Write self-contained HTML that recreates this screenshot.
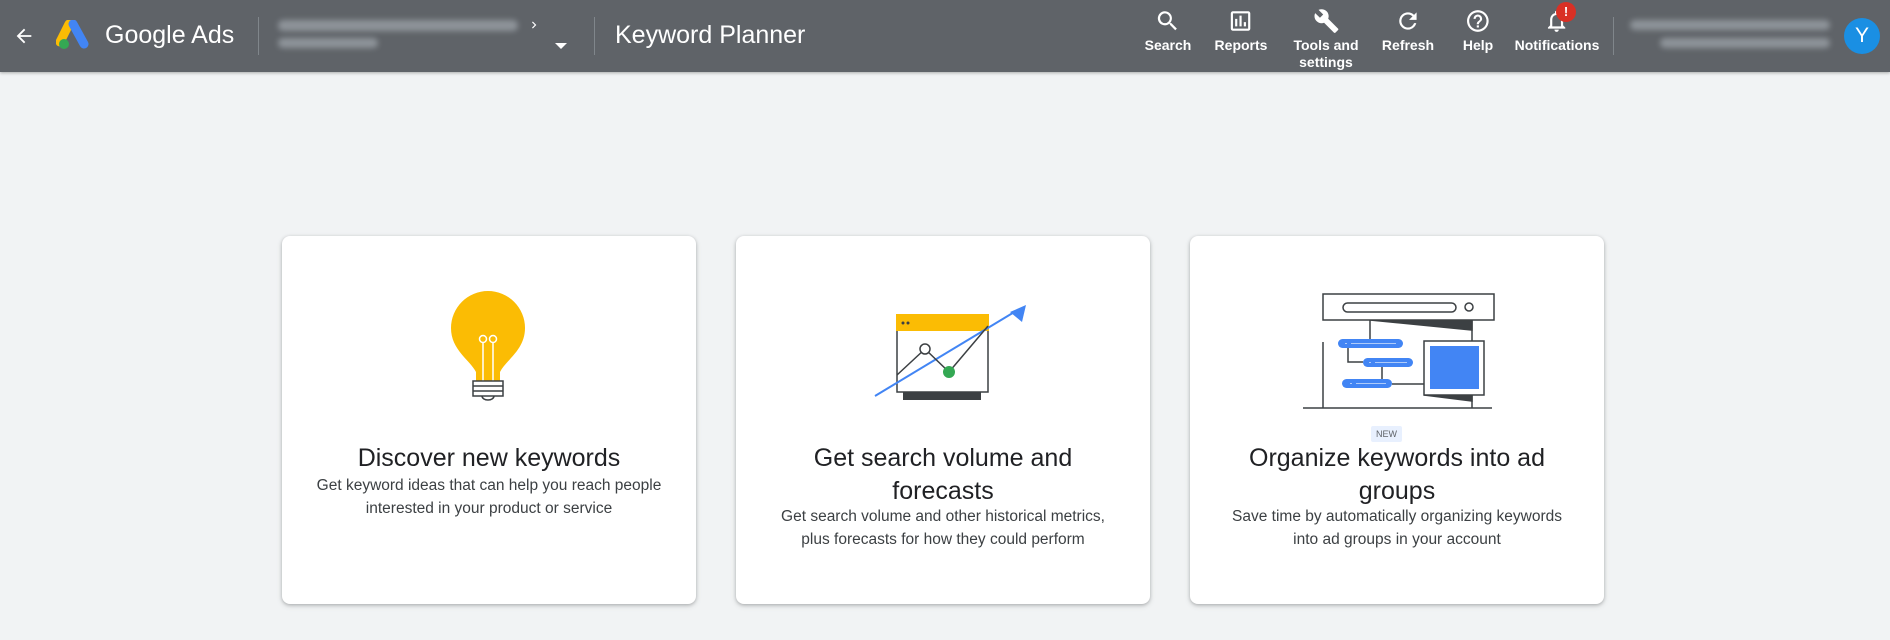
<!DOCTYPE html>
<html><head><meta charset="utf-8"><style>
*{margin:0;padding:0;box-sizing:border-box}
body{width:1890px;height:640px;background:#f1f3f4;font-family:"Liberation Sans",Arial,sans-serif;position:relative;overflow:hidden}
.hdr{position:absolute;left:0;top:0;width:1890px;height:72px;background:#5f6368;box-shadow:0 1px 3px rgba(0,0,0,.3)}
.abs{position:absolute}
.vd{position:absolute;width:1px;background:#80868b;top:17px;height:38px}
.blur{position:absolute;background:#9aa0a6;border-radius:6px;filter:blur(3px);opacity:.8}
.nav{position:absolute;top:8px;color:#fff;font-size:14px;font-weight:bold;text-align:center;transform:translateX(-50%);line-height:17px;white-space:nowrap}
.nav svg{display:block;margin:0 auto 3px}
.card{position:absolute;top:236px;width:414px;height:368px;background:#fff;border-radius:8px;box-shadow:0 1px 3px rgba(60,64,67,.3),0 2px 6px rgba(60,64,67,.15)}
.t{position:absolute;left:0;width:100%;text-align:center;color:#202124;font-size:25px;line-height:33px}
.d{position:absolute;left:0;width:100%;text-align:center;color:#3c4043;font-size:15.5px;line-height:22.5px}
</style></head><body>
<div class="hdr">
<svg class="abs" style="left:13px;top:25px" width="22" height="22" viewBox="0 0 24 24"><path d="M20 11H7.8l5.6-5.6L12 4l-8 8 8 8 1.4-1.4L7.8 13H20z" fill="#fff"/></svg>
<svg class="abs" style="left:56px;top:20px" width="36" height="32" viewBox="0 0 36 32"><path d="M13 4 L4 22" stroke="#fbbc04" stroke-width="9" stroke-linecap="round"/><path d="M17 4 L28 24" stroke="#4285f4" stroke-width="9" stroke-linecap="round"/><circle cx="8" cy="24" r="5" fill="#34a853"/></svg>
<div class="abs" style="left:105px;top:20px;color:#fff;font-size:25px;line-height:30px">Google Ads</div>
<div class="vd" style="left:258px"></div>
<div class="blur" style="left:278px;top:20px;width:240px;height:11px"></div>
<div class="blur" style="left:278px;top:38px;width:100px;height:10px"></div>
<svg class="abs" style="left:527px;top:18px" width="14" height="14" viewBox="0 0 24 24"><path d="M8.6 16.6 13.2 12 8.6 7.4 10 6l6 6-6 6z" fill="#fff"/></svg>
<svg class="abs" style="left:554px;top:42px" width="14" height="8"><path d="M1 1h12L7 7z" fill="#fff"/></svg>
<div class="vd" style="left:594px"></div>
<div class="abs" style="left:615px;top:20px;color:#fff;font-size:25px;line-height:30px">Keyword Planner</div>

<div class="nav" style="left:1168px"><svg width="26" height="26" viewBox="0 0 24 24"><path d="M15.5 14h-.8l-.3-.3A6.5 6.5 0 1 0 9.5 16a6.5 6.5 0 0 0 4.2-1.6l.3.3v.8l5 5 1.5-1.5zm-6 0A4.5 4.5 0 1 1 14 9.5 4.5 4.5 0 0 1 9.5 14z" fill="#fff"/></svg>Search</div>
<div class="nav" style="left:1241px"><svg width="26" height="26" viewBox="0 0 24 24"><path d="M19 3H5a2 2 0 0 0-2 2v14a2 2 0 0 0 2 2h14a2 2 0 0 0 2-2V5a2 2 0 0 0-2-2zm0 16H5V5h14zM7 10h2v7H7zm4-3h2v10h-2zm4 6h2v4h-2z" fill="#fff"/></svg>Reports</div>
<div class="nav" style="left:1326px"><svg width="26" height="26" viewBox="0 0 24 24"><path d="M22.7 19l-9.1-9.1c.9-2.3.4-5-1.5-6.9-2-2-5-2.4-7.4-1.3L9 6 6 9 1.6 4.7C.4 7.1.9 10.1 2.9 12.1c1.9 1.9 4.6 2.4 6.9 1.5l9.1 9.1c.4.4 1 .4 1.4 0l2.3-2.3c.5-.4.5-1.1.1-1.4z" fill="#fff"/></svg>Tools and<br>settings</div>
<div class="nav" style="left:1408px"><svg width="26" height="26" viewBox="0 0 24 24"><path d="M17.65 6.35A7.960 7.96 0 0 0 12 4a8 8 0 1 0 7.73 10h-2.08A6 6 0 1 1 12 6c1.66 0 3.140.69 4.22 1.78L13 11h7V4z" fill="#fff"/></svg>Refresh</div>
<div class="nav" style="left:1478px"><svg width="26" height="26" viewBox="0 0 24 24"><path d="M11 18h2v-2h-2zm1-16a10 10 0 1 0 0 20 10 10 0 0 0 0-20zm0 18a8 8 0 1 1 0-16 8 8 0 0 1 0 16zm0-14a4 4 0 0 0-4 4h2a2 2 0 0 1 4 0c0 2-3 1.75-3 5h2c0-2.25 3-2.5 3-5a4 4 0 0 0-4-4z" fill="#fff"/></svg>Help</div>
<div class="nav" style="left:1557px"><svg width="26" height="26" viewBox="0 0 24 24"><path d="M12 22a2 2 0 0 0 2-2h-4a2 2 0 0 0 2 2zm6-6v-5c0-3.07-1.64-5.64-4.5-6.32V4a1.5 1.5 0 0 0-3 0v.68C7.630 5.36 6 7.92 6 11v5l-2 2v1h16v-1zm-2 1H8v-6c0-2.48 1.51-4.5 4-4.5s4 2.02 4 4.5z" fill="#fff"/></svg>Notifications</div>
<div class="abs" style="left:1556px;top:2px;width:20px;height:20px;border-radius:50%;background:#d93025;color:#fff;font-size:13px;font-weight:bold;text-align:center;line-height:20px">!</div>
<div class="vd" style="left:1613px"></div>
<div class="blur" style="left:1630px;top:20px;width:200px;height:10px"></div>
<div class="blur" style="left:1660px;top:38px;width:170px;height:10px"></div>
<div class="abs" style="left:1844px;top:18px;width:36px;height:36px;border-radius:50%;background:#1a8fe3;color:#fff;font-size:21px;text-align:center;line-height:36px">Y</div>
</div>

<div class="card" style="left:282px">
<svg class="abs" style="left:0;top:0" width="414" height="368">
<g transform="translate(-282,-236)">
<path d="M476 372 C470 360 451 350 451 328 A37 37 0 1 1 525 328 C525 350 506 360 500 372 L500 381 L476 381 Z" fill="#fbbc04"/>
<path d="M483 381V343 M493 381V343" stroke="#fff" stroke-width="1.5" fill="none"/>
<circle cx="483" cy="339" r="3.5" stroke="#fff" stroke-width="1.5" fill="none"/><circle cx="493" cy="339" r="3.5" stroke="#fff" stroke-width="1.5" fill="none"/>
<rect x="473" y="381" width="30" height="15" fill="#fff" stroke="#3c4043" stroke-width="1.5"/>
<path d="M473 386h30M473 391h30" stroke="#3c4043" stroke-width="1.5"/>
<path d="M482 396 a6 4 0 0 0 12 0" stroke="#3c4043" stroke-width="1.5" fill="none"/>
</g></svg>
<div class="t" style="top:206px">Discover new keywords</div>
<div class="d" style="top:239px">Get keyword ideas that can help you reach people<br>interested in your product or service</div>
</div>

<div class="card" style="left:736px">
<svg class="abs" style="left:0;top:0" width="414" height="368">
<g transform="translate(-736,-236)">
<rect x="897" y="315" width="91" height="77" fill="#fff" stroke="#3c4043" stroke-width="1.5"/>
<rect x="896" y="314" width="93" height="17" fill="#fbbc04"/>
<circle cx="903" cy="323" r="1.5" fill="#3c4043"/><circle cx="908" cy="323" r="1.5" fill="#3c4043"/>
<rect x="903" y="392" width="78" height="8" fill="#3c4043"/>
<path d="M875 396 L1016 311" stroke="#4285f4" stroke-width="2"/>
<path d="M1026 305 L1022 322 L1010 312 Z" fill="#4285f4"/>
<path d="M897 375 L925 349 L949 372 L988 326" stroke="#3c4043" stroke-width="1.5" fill="none"/>
<circle cx="925" cy="349" r="5" fill="#fff" stroke="#3c4043" stroke-width="1.5"/>
<circle cx="949" cy="372" r="6" fill="#34a853"/>
</g></svg>
<div class="t" style="top:206px">Get search volume and<br>forecasts</div>
<div class="d" style="top:270px">Get search volume and other historical metrics,<br>plus forecasts for how they could perform</div>
</div>

<div class="card" style="left:1190px">
<svg class="abs" style="left:0;top:0" width="414" height="368">
<g transform="translate(-1190,-236)" stroke="#3c4043" stroke-width="1.5" fill="none">
<path d="M1370 320 L1472 320 L1472 330 Z" fill="#3c4043"/>
<rect x="1323" y="294" width="171" height="26" fill="#fff"/>
<rect x="1343" y="303" width="113" height="9" rx="4.5"/>
<circle cx="1469" cy="307" r="4"/>
<path d="M1323 342V408 M1472 320V341 M1472 395V408 M1303 408H1492"/>
<path d="M1370 320V339 M1348 348V362H1363 M1382 367V379 M1392 384H1424"/>
<path d="M1424 395 L1472 395 L1472 401 Z" fill="#3c4043"/>
<rect x="1424" y="341" width="60" height="54" fill="#fff"/>
<rect x="1430" y="346" width="49" height="43" fill="#4285f4" stroke="none"/>
<rect x="1338" y="339" width="65" height="9" rx="4.5" fill="#4285f4" stroke="none"/>
<rect x="1363" y="358" width="50" height="9" rx="4.5" fill="#4285f4" stroke="none"/>
<rect x="1342" y="379" width="50" height="9" rx="4.5" fill="#4285f4" stroke="none"/>
<path d="M1345 343.5h2M1351 343.5h45M1369 362.5h2M1375 362.5h32M1350 383.5h2M1356 383.5h30" stroke="#aecbfa" stroke-width="1"/>
</g></svg>
<div class="abs" style="left:181px;top:190px;width:31px;height:16px;background:#e8f0fe;color:#5f6368;font-size:9px;text-align:center;line-height:16px;border-radius:2px">NEW</div>
<div class="t" style="top:206px">Organize keywords into ad<br>groups</div>
<div class="d" style="top:270px">Save time by automatically organizing keywords<br>into ad groups in your account</div>
</div>
</body></html>
